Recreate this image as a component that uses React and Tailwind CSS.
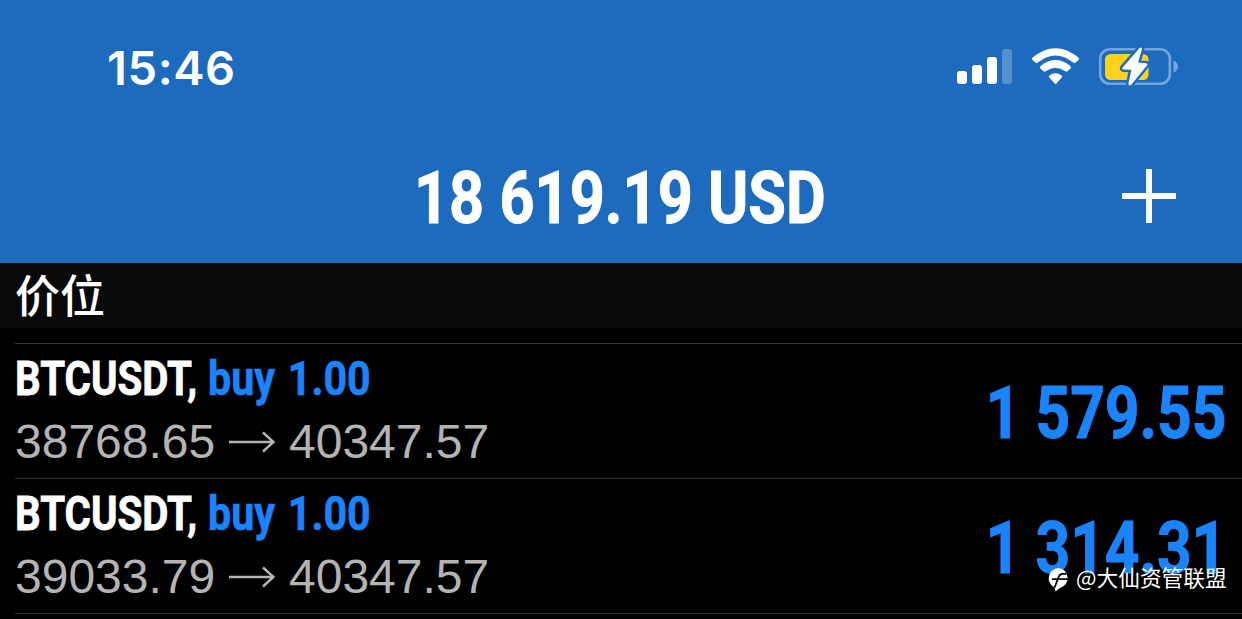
const deals = [
  { id: 1, symbol: 'BTCUSDT,', side: 'buy 1.00', open: '38768.65', close: '40347.57', profit: '1 579.55' },
  { id: 2, symbol: 'BTCUSDT,', side: 'buy 1.00', open: '39033.79', close: '40347.57', profit: '1 314.31' },
]

function StatusIcons() {
  return (
    <svg width="224" height="44" viewBox="956 45 224 44" fill="none">
      {/* signal */}
      <g fill="#fff">
        <rect x="957" y="71" width="10" height="13" rx="3" />
        <rect x="972" y="65" width="10" height="19" rx="3" />
        <rect x="987" y="57" width="10" height="27" rx="3" />
        <rect x="1002" y="49" width="10" height="35" rx="3" opacity="0.25" />
      </g>
      {/* wifi */}
      <g fill="#fff">
        <path d="M1032.6 57.6 Q1055.5 38.8 1078.4 57.6 Q1079.7 58.8 1078.5 60 L1075.6 62.6 Q1074.5 63.6 1073.2 62.6 Q1055.5 48.6 1037.8 62.6 Q1036.5 63.6 1035.4 62.6 L1032.5 60 Q1031.3 58.8 1032.6 57.6Z" />
        <path d="M1040.6 66 Q1055.5 54.2 1070.4 66 Q1071.8 67.2 1070.6 68.4 L1067.5 71.3 Q1066.4 72.2 1065.2 71.3 Q1055.5 64.2 1045.8 71.3 Q1044.6 72.2 1043.5 71.3 L1040.4 68.4 Q1039.2 67.2 1040.6 66Z" />
        <path d="M1049.4 75.4 Q1055.5 71.3 1061.6 75.4 Q1062.8 76.4 1061.7 77.4 L1056.6 83.3 Q1055.5 84.5 1054.4 83.3 L1049.3 77.4 Q1048.2 76.4 1049.4 75.4Z" />
      </g>
      {/* battery */}
      <rect x="1100.2" y="49.2" width="69.6" height="34.6" rx="9.5" stroke="#76a5dc" strokeWidth="2.6" />
      <path d="M1173.5 60.5 Q1178 62.5 1178 66.5 Q1178 70.5 1173.5 72.5Z" fill="#76a5dc" />
      <rect x="1105" y="54" width="43.5" height="26" rx="5.5" fill="#ffd11a" />
      <path d="M1139.6 48 L1122.6 67.5 Q1121.6 69.3 1123.6 69.5 L1131.4 69.8 L1128.4 83.8 Q1129 86.5 1131.2 84.7 L1147.2 65.2 Q1148.2 63.5 1146.2 63.2 L1138 62.6 L1142 49.6 Q1142 46.3 1139.6 48Z" fill="#fff" stroke="#1c6bbe" strokeWidth="5" strokeLinejoin="round" paintOrder="stroke" />
    </svg>
  )
}

function Arrow() {
  return (
    <svg width="46" height="22" viewBox="0 0 46 22" fill="none" stroke="#b4b4b4" strokeWidth="2.4">
      <path d="M0 11H44.5M34 1.5L44.5 11L34 20.5" />
    </svg>
  )
}

function Deal({ deal }) {
  return (
    <div className="ml-[15px] flex h-[135px] shrink-0 items-start justify-between border-t border-[#303030]">
      <div className="pt-[10px]">
        <div className="flex h-[50px] font-['Roboto',sans-serif] text-[48.5px] leading-[50px] font-bold whitespace-pre">
          <span className="w-[193px] origin-left scale-x-[0.83] text-white [-webkit-text-stroke:0.8px_#fff]">{deal.symbol}</span>
          <span className="origin-left scale-x-[0.85] text-[#1a84ff] [-webkit-text-stroke:0.6px_#1a84ff] [word-spacing:3px]">{deal.side}</span>
        </div>
        <div className="mt-[13px] flex h-[50px] items-center text-[48px] leading-[50px] text-[#b4b4b4]">
          <span className="w-[214px]">{deal.open}</span>
          <Arrow />
          <span className="ml-[14px]">{deal.close}</span>
        </div>
      </div>
      <div className="origin-right scale-x-[0.84] pt-[33px] pr-[18px] font-['Roboto',sans-serif] text-[72px] leading-[74px] font-bold whitespace-pre text-[#1a84ff] [-webkit-text-stroke:1px_#1a84ff]">
        {deal.profit}
      </div>
    </div>
  )
}

function Watermark() {
  return (
    <div className="absolute top-[563px] left-[1047px] flex h-7 items-center gap-[6px] text-white">
      <svg width="23" height="26" viewBox="0 0 23 26" className="mt-[4px]">
        <path d="M11.5 2A10.2 10.2 0 0 1 13 22L8.5 25.5L7.5 21.4A10.2 10.2 0 0 1 11.5 2Z" fill="#fff" />
        <path d="M19.5 7.8H15.5Q12.6 7.8 11.6 11L7.6 21.5M5 13.2H21.5" fill="none" stroke="#000" strokeWidth="1.8" />
      </svg>
      <span className="font-['Noto_Sans_CJK_SC',sans-serif] text-[21.7px] leading-7 whitespace-nowrap">@大仙资管联盟</span>
    </div>
  )
}

export default function App() {
  return (
    <div className="relative flex h-[619px] w-[1242px] flex-col overflow-hidden bg-black font-['Liberation_Sans','Noto_Sans_CJK_SC',sans-serif]">
      <header className="h-[263px] shrink-0 bg-[#1c6bbe] text-white">
        <div className="flex h-[134px] items-center justify-between pr-[62px] pl-[107px]">
          <span className="font-['Inter',sans-serif] text-[47px] leading-none font-semibold tracking-[0.6px]">15:46</span>
          <StatusIcons />
        </div>
        <div className="flex h-[127px] items-center pl-[414px]">
          <h1 className="flex pt-[2px] font-['Roboto',sans-serif] text-[72px] leading-[74px] font-bold whitespace-pre [-webkit-text-stroke:1px_#fff]">
            <span className="w-[294px] origin-left scale-x-[0.85]">18 619.19</span>
            <span className="w-[156px] origin-left scale-x-[0.85]">USD</span>
          </h1>
          <button type="button" className="ml-[258px] pb-[3px]">
            <svg width="54" height="54" viewBox="0 0 54 54" stroke="#fff" strokeWidth="6">
              <path d="M27 0V54M0 27H54" />
            </svg>
          </button>
        </div>
      </header>

      <div className="mb-[15px] flex h-[65px] shrink-0 items-center bg-[#090909] pl-[15px] text-[45px] leading-[63px] font-medium text-white">
        <span className="-mt-[4px] font-['Noto_Sans_CJK_SC',sans-serif]">价位</span>
      </div>

      {deals.map((deal) => (
        <Deal key={deal.id} deal={deal} />
      ))}
      <div className="ml-[15px] h-px shrink-0 bg-[#303030]" />

      <Watermark />
    </div>
  )
}
